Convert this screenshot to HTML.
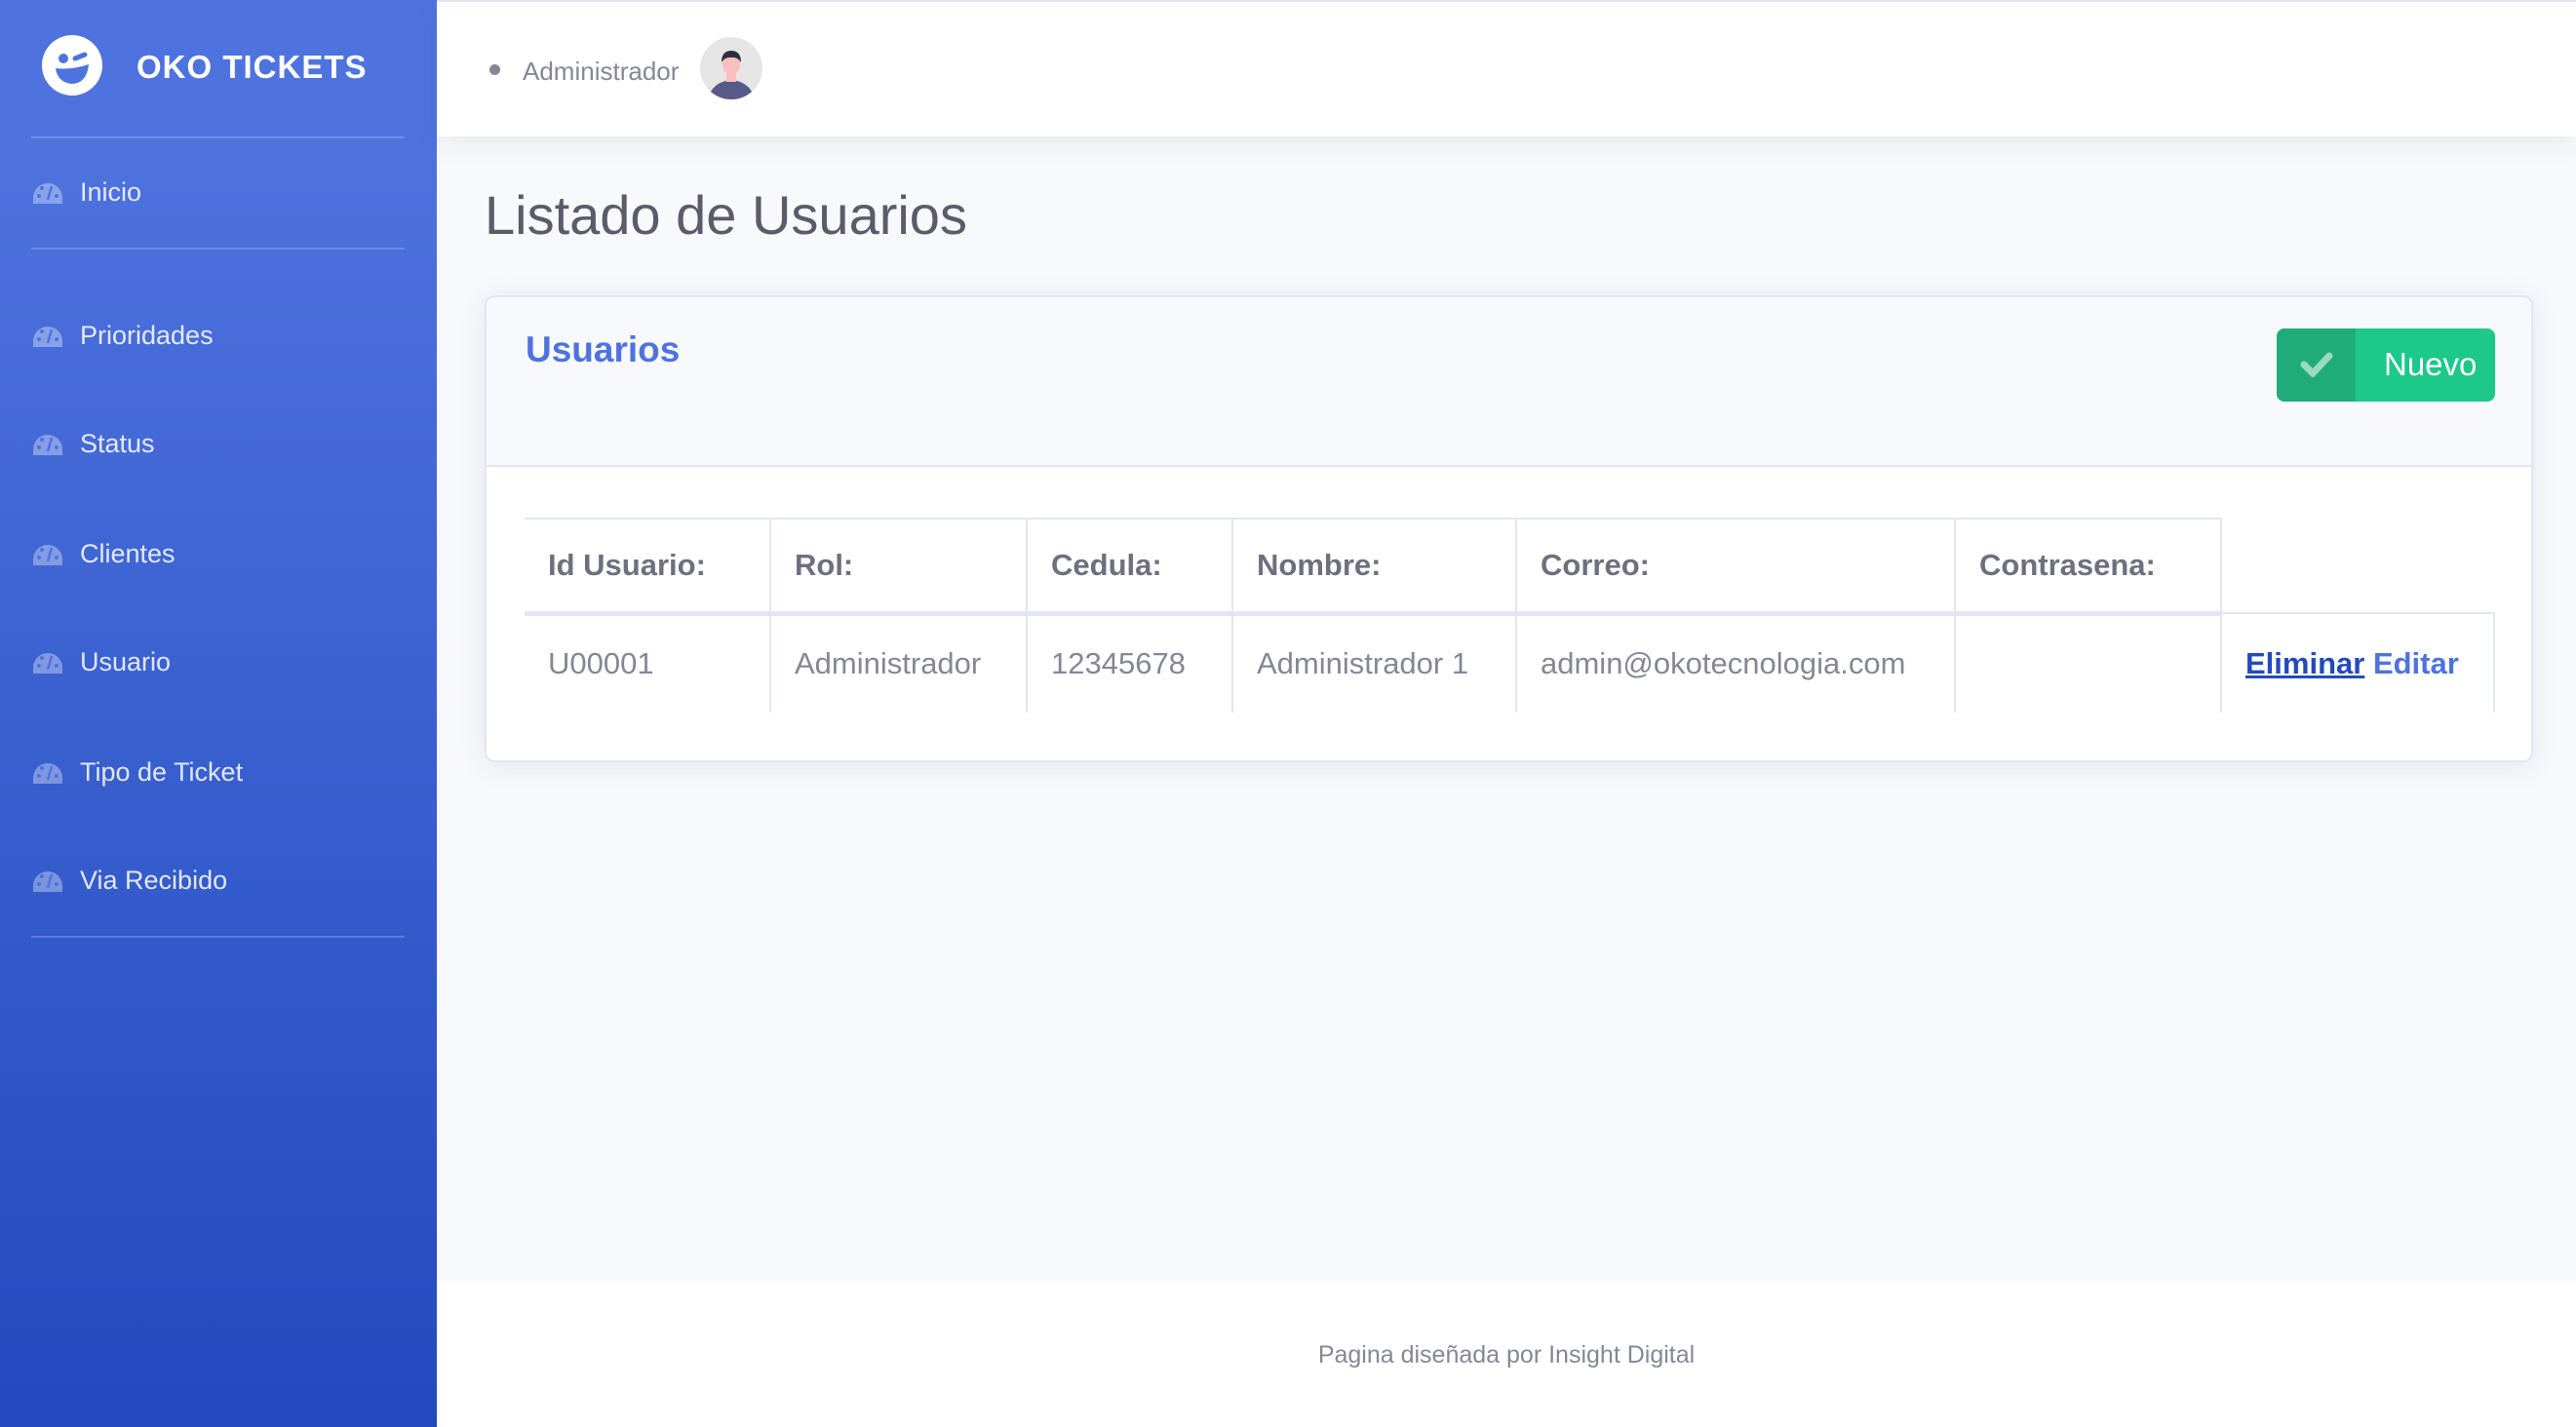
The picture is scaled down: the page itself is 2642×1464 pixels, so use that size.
<!DOCTYPE html>
<html><head><meta charset="utf-8"><style>
*{box-sizing:border-box;margin:0;padding:0}
body{width:2642px;height:1464px;position:relative;overflow:hidden;background:#f8f9fc;font-family:"Liberation Sans",sans-serif;color:#858796}
.sb{position:absolute;left:0;top:0;width:448px;height:1464px;background:linear-gradient(180deg,#4e73df 10%,#224abe 100%)}
.logo{position:absolute;left:43px;top:36px;width:62px;height:62px;border-radius:50%;background:#fff}
.brand{position:absolute;left:140px;top:50px;color:#fff;font-weight:bold;font-size:33px;letter-spacing:1px}
.hr{position:absolute;left:32px;width:383px;height:2px;background:rgba(255,255,255,.2)}
.nav{position:absolute;left:34px;color:rgba(255,255,255,.85);font-size:27px;height:34px;line-height:34px}
.nav svg{position:absolute;left:0;top:3px}
.nav span{position:absolute;left:48px;white-space:nowrap}
.top{position:absolute;left:448px;top:0;width:2194px;height:140px;background:#fff;box-shadow:0 8px 24px rgba(58,59,69,.08);border-top:2px solid #e3e6f0}
h1{position:absolute;left:497px;top:188px;font-weight:normal;font-size:56px;color:#5a5c69}
.card{position:absolute;left:497px;top:303px;width:2101px;height:479px;background:#fff;border:2px solid #e3e6f0;border-radius:10px;box-shadow:0 4px 30px rgba(58,59,69,.1);overflow:hidden}
.ch{height:174px;background:#f8f9fc;border-bottom:2px solid #e3e6f0;position:relative}
.ch b{position:absolute;left:40px;top:33px;font-size:37px;color:#4e73df}
.btn{position:absolute;left:1836px;top:32px;width:224px;height:75px;background:#1cc88a;border-radius:8px;overflow:hidden}
.btn i{position:absolute;left:0;top:0;width:81px;height:75px;background:#1fac79}
.btn span{position:absolute;left:110px;top:18px;color:#fff;font-size:33px}
table{position:absolute;left:538px;top:531px;border-collapse:collapse;font-size:31px}
th,td{border:2px solid #e3e6f0;text-align:left;padding:0 24px;white-space:nowrap}
th{height:97px;color:#6e707e;border-bottom:5px solid #e3e6f0}
td{height:102px;border-bottom:none}
tr>*:first-child{border-left:none}
.foot{position:absolute;left:448px;top:1314px;width:2194px;height:150px;background:#fff;text-align:center;font-size:25px;color:#858796;padding-top:62px}
</style></head><body>
<div class="sb">
<div class="logo"><svg width="62" height="62" viewBox="0 0 62 62"><circle cx="22" cy="24" r="5" fill="#4e73df"/><path d="M34 24 L44 20" stroke="#4e73df" stroke-width="5" stroke-linecap="round"/><path d="M14 34 Q30 36 48 30 Q46 50 30 50 Q16 48 14 34Z" fill="#4e73df"/></svg></div>
<div class="brand">OKO TICKETS</div>
<div class="hr" style="top:140px"></div>
<div class="nav" style="top:180px"><svg width="30" height="26" viewBox="0 0 30 26"><path d="M0 20 A15 15 0 0 1 30 20 L30 26 L0 26Z" fill="rgba(255,255,255,.35)"/><circle cx="6" cy="18" r="2" fill="#4e73df"/><circle cx="9" cy="10" r="2" fill="#4e73df"/><circle cx="24" cy="18" r="2" fill="#4e73df"/><path d="M15 22 L19 8" stroke="#4e73df" stroke-width="2.5"/></svg><span>Inicio</span></div>
<div class="hr" style="top:254px"></div>
<div class="nav" style="top:327px"><svg width="30" height="26" viewBox="0 0 30 26"><path d="M0 20 A15 15 0 0 1 30 20 L30 26 L0 26Z" fill="rgba(255,255,255,.35)"/><circle cx="6" cy="18" r="2" fill="#4e73df"/><circle cx="9" cy="10" r="2" fill="#4e73df"/><circle cx="24" cy="18" r="2" fill="#4e73df"/><path d="M15 22 L19 8" stroke="#4e73df" stroke-width="2.5"/></svg><span>Prioridades</span></div>
<div class="nav" style="top:438px"><svg width="30" height="26" viewBox="0 0 30 26"><path d="M0 20 A15 15 0 0 1 30 20 L30 26 L0 26Z" fill="rgba(255,255,255,.35)"/><circle cx="6" cy="18" r="2" fill="#4e73df"/><circle cx="9" cy="10" r="2" fill="#4e73df"/><circle cx="24" cy="18" r="2" fill="#4e73df"/><path d="M15 22 L19 8" stroke="#4e73df" stroke-width="2.5"/></svg><span>Status</span></div>
<div class="nav" style="top:551px"><svg width="30" height="26" viewBox="0 0 30 26"><path d="M0 20 A15 15 0 0 1 30 20 L30 26 L0 26Z" fill="rgba(255,255,255,.35)"/><circle cx="6" cy="18" r="2" fill="#4e73df"/><circle cx="9" cy="10" r="2" fill="#4e73df"/><circle cx="24" cy="18" r="2" fill="#4e73df"/><path d="M15 22 L19 8" stroke="#4e73df" stroke-width="2.5"/></svg><span>Clientes</span></div>
<div class="nav" style="top:662px"><svg width="30" height="26" viewBox="0 0 30 26"><path d="M0 20 A15 15 0 0 1 30 20 L30 26 L0 26Z" fill="rgba(255,255,255,.35)"/><circle cx="6" cy="18" r="2" fill="#4e73df"/><circle cx="9" cy="10" r="2" fill="#4e73df"/><circle cx="24" cy="18" r="2" fill="#4e73df"/><path d="M15 22 L19 8" stroke="#4e73df" stroke-width="2.5"/></svg><span>Usuario</span></div>
<div class="nav" style="top:775px"><svg width="30" height="26" viewBox="0 0 30 26"><path d="M0 20 A15 15 0 0 1 30 20 L30 26 L0 26Z" fill="rgba(255,255,255,.35)"/><circle cx="6" cy="18" r="2" fill="#4e73df"/><circle cx="9" cy="10" r="2" fill="#4e73df"/><circle cx="24" cy="18" r="2" fill="#4e73df"/><path d="M15 22 L19 8" stroke="#4e73df" stroke-width="2.5"/></svg><span>Tipo de Ticket</span></div>
<div class="nav" style="top:886px"><svg width="30" height="26" viewBox="0 0 30 26"><path d="M0 20 A15 15 0 0 1 30 20 L30 26 L0 26Z" fill="rgba(255,255,255,.35)"/><circle cx="6" cy="18" r="2" fill="#4e73df"/><circle cx="9" cy="10" r="2" fill="#4e73df"/><circle cx="24" cy="18" r="2" fill="#4e73df"/><path d="M15 22 L19 8" stroke="#4e73df" stroke-width="2.5"/></svg><span>Via Recibido</span></div>
<div class="hr" style="top:960px"></div>
</div>
<div class="top">
<div style="position:absolute;left:54px;top:64px;width:11px;height:11px;border-radius:50%;background:#858796"></div>
<div style="position:absolute;left:88px;top:56px;font-size:26px;color:#858796">Administrador</div>
<svg style="position:absolute;left:270px;top:36px" width="64" height="64" viewBox="0 0 64 64"><circle cx="32" cy="32" r="32" fill="#e5e5e5"/><clipPath id="c"><circle cx="32" cy="32" r="32"/></clipPath><g clip-path="url(#c)"><path d="M8 64 Q12 46 32 44 Q52 46 56 64Z" fill="#575a89"/><rect x="27" y="34" width="10" height="12" fill="#fbbebe"/><ellipse cx="32" cy="28" rx="9" ry="11" fill="#fbbebe"/><path d="M22 26 Q22 14 32 14 Q42 14 42 26 Q38 20 32 21 Q26 20 22 26Z" fill="#2f2e41"/></g></svg>
</div>
<h1>Listado de Usuarios</h1>
<div class="card"><div class="ch"><b>Usuarios</b>
<div class="btn"><i><svg style="position:absolute;left:24px;top:24px" width="34" height="26" viewBox="0 0 34 26"><path d="M4 13 L13 22 L30 4" stroke="rgba(255,255,255,.55)" stroke-width="7" fill="none" stroke-linecap="round"/></svg></i><span>Nuevo</span></div></div></div>
<table>
<tr><th style="width:252px">Id Usuario:</th><th style="width:263px">Rol:</th><th style="width:211px">Cedula:</th><th style="width:291px">Nombre:</th><th style="width:450px">Correo:</th><th style="width:273px">Contrasena:</th><th style="width:280px;border:none;border-left:2px solid #e3e6f0;border-bottom:2px solid #e3e6f0"></th></tr>
<tr><td>U00001</td><td>Administrador</td><td>12345678</td><td>Administrador 1</td><td>admin@okotecnologia.com</td><td></td><td style="font-weight:bold;color:#4e73df"><u style="color:#224abe">Eliminar</u> Editar</td></tr>
</table>
<div class="foot">Pagina diseñada por Insight Digital</div>
</body></html>
